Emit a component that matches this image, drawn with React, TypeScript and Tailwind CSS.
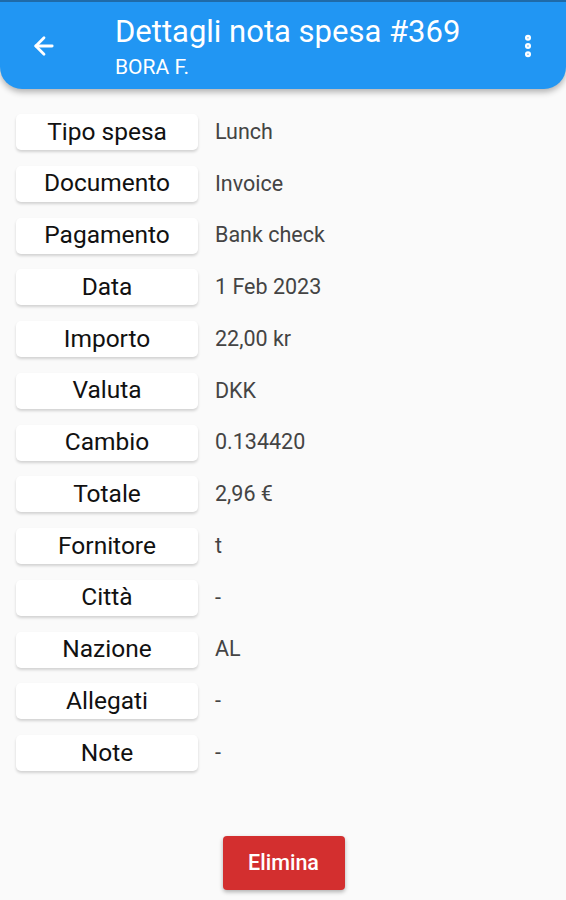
import { ArrowLeft, EllipsisVertical } from "lucide-react";

const rows: Array<{ label: string; value: string }> = [
  { label: "Tipo spesa", value: "Lunch" },
  { label: "Documento", value: "Invoice" },
  { label: "Pagamento", value: "Bank check" },
  { label: "Data", value: "1 Feb 2023" },
  { label: "Importo", value: "22,00 kr" },
  { label: "Valuta", value: "DKK" },
  { label: "Cambio", value: "0.134420" },
  { label: "Totale", value: "2,96 €" },
  { label: "Fornitore", value: "t" },
  { label: "Città", value: "-" },
  { label: "Nazione", value: "AL" },
  { label: "Allegati", value: "-" },
  { label: "Note", value: "-" },
];

export default function App() {
  return (
    <div className="flex h-[900px] w-[566px] flex-col bg-[#fafafa] font-['Roboto',sans-serif]">
      <header className="flex h-[89px] shrink-0 items-center rounded-b-[22px] border-t-2 border-[#1f6aa8] bg-[#2196f3] pl-[30px] pr-[24px] text-white shadow-[0_3px_6px_rgba(0,0,0,0.3)]">
        <ArrowLeft size={28} strokeWidth={2.4} />
        <div className="ml-[57px] flex-1 pt-[2px]">
          <h1 className="text-[31px] leading-[34px]">Dettagli nota spesa #369</h1>
          <p className="mt-[6px] text-[21px] leading-[24px]">BORA F.</p>
        </div>
        <EllipsisVertical size={28} strokeWidth={3.2} />
      </header>

      <main className="flex flex-col gap-[15.75px] px-[16px] pt-[25px]">
        {rows.map((row) => (
          <div key={row.label} className="flex items-center">
            <div className="flex h-[36px] w-[182px] items-center justify-center rounded-[5px] bg-white text-[24.5px] text-[#111] shadow-[0_2px_3px_rgba(0,0,0,0.16)]">
              {row.label}
            </div>
            <span className="ml-[17px] text-[21.5px] text-[#444]">{row.value}</span>
          </div>
        ))}
      </main>

      <div className="mt-auto mb-[10px] flex justify-center">
        <button
          type="button"
          className="ml-[1px] h-[54px] w-[122px] rounded-[4px] bg-[#d32f2f] text-[21.5px] font-medium text-white shadow-[0_2px_4px_rgba(0,0,0,0.3)]"
        >
          Elimina
        </button>
      </div>
    </div>
  );
}
